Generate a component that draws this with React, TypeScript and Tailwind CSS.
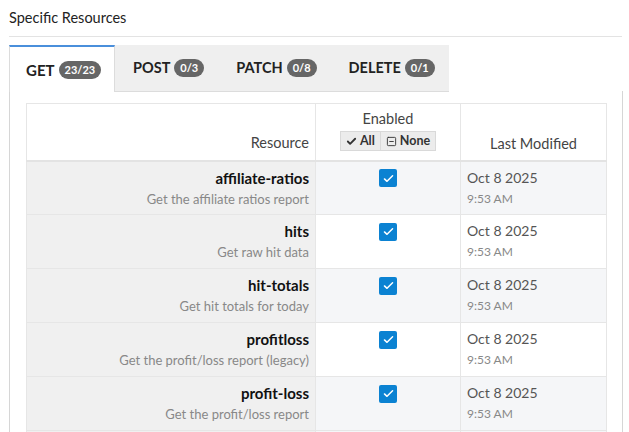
import { Check, SquareMinus } from 'lucide-react';

const rows = [
    { name: 'affiliate-ratios', desc: 'Get the affiliate ratios report' },
    { name: 'hits', desc: 'Get raw hit data' },
    { name: 'hit-totals', desc: 'Get hit totals for today' },
    { name: 'profitloss', desc: 'Get the profit/loss report (legacy)' },
    { name: 'profit-loss', desc: 'Get the profit/loss report' },
];

const tabs = [
    { label: 'GET', count: '23/23', active: true },
    { label: 'POST', count: '0/3' },
    { label: 'PATCH', count: '0/8' },
    { label: 'DELETE', count: '0/1' },
];

const CheckBox = () => (
    <span className="inline-flex w-[18px] h-[18px] items-center justify-center rounded-[2px] bg-[#0b82d2]">
        <svg viewBox="0 0 16 16" className="w-[13px] h-[13px]" fill="none" stroke="white" strokeWidth="1.8" strokeLinecap="round" strokeLinejoin="round">
            <path d="M3 8.5l3.2 3L13 4.5" />
        </svg>
    </span>
);

const App = () => {
    return (
        <div className="w-[629px] h-[432px] overflow-hidden bg-white font-['Lato','Liberation_Sans',sans-serif] text-[#222]">
            <div className="px-[9px] pt-[8px]">
                <h2 className="text-[14.5px] leading-[20px] text-[#222]">Specific Resources</h2>
                <div className="mt-[8px] h-px w-[613px] bg-[#e3e3e3]" />

                <div className="mt-[8px] flex w-fit bg-[#efefef] h-[47px]">
                    {tabs.map((t) =>
                        t.active ? (
                            <div
                                key={t.label}
                                className="shrink-0 flex items-center gap-[4px] h-[47px] w-[106px] pl-[16px] pt-[1px] bg-white border-t-2 border-[#4a8fdb] border-l border-l-[#dcdcdc] border-r border-r-[#dcdcdc]"
                            >
                                <span className="text-[15px] font-bold">{t.label}</span>
                                <span className="rounded-full bg-[#666] text-white text-[11px] font-bold px-[6px] leading-[18px]">{t.count}</span>
                            </div>
                        ) : (
                            <div key={t.label} className="shrink-0 flex items-center gap-[4px] h-[47px] pl-[18px] pr-[14px] border-b border-[#dcdcdc]">
                                <span className="text-[14.5px] font-bold">{t.label}</span>
                                <span className="rounded-full bg-[#666] text-white text-[11px] font-bold px-[6px] leading-[18px]">{t.count}</span>
                            </div>
                        ),
                    )}
                </div>

                <div className="w-[614px] h-[400px] border-l border-r border-[#d6d6d6] -mt-px pt-[12px] pl-[16px]">
                    <table className="w-[580px] border-collapse table-fixed">
                        <colgroup>
                            <col className="w-[289px]" />
                            <col className="w-[145px]" />
                            <col className="w-[146px]" />
                        </colgroup>
                        <thead>
                            <tr className="h-[57px] border-b-2 border-[#e3e3e3]">
                                <th className="border border-[#e6e6e6] align-bottom text-right font-normal text-[14.5px] text-[#444] pr-[6px] pb-[6px]">Resource</th>
                                <th className="border border-[#e6e6e6] align-top font-normal text-[14.5px] text-[#444] pt-[6px]">
                                    <div className="leading-[18px]">Enabled</div>
                                    <div className="mt-[3px] inline-flex">
                                        <span className="flex items-center gap-[3px] bg-[#ececec] border border-[#d9d9d9] px-[5px] h-[20px] text-[12.5px] font-bold text-[#333]">
                                            <Check size={11} strokeWidth={4} />All
                                        </span>
                                        <span className="flex items-center gap-[3px] bg-[#ececec] border border-l-0 border-[#d9d9d9] px-[5px] h-[20px] text-[12.5px] font-bold text-[#333]">
                                            <SquareMinus size={11} strokeWidth={2} />None
                                        </span>
                                    </div>
                                </th>
                                <th className="border border-[#e6e6e6] align-middle font-normal text-[14.5px] text-[#444] pt-[25px]">Last Modified</th>
                            </tr>
                        </thead>
                        <tbody>
                            {rows.map((r, i) => (
                                <tr key={r.name} className={i % 2 === 0 ? 'bg-[#f5f6f8] h-[54px]' : 'bg-white h-[54px]'}>
                                    <td className="border border-[#e6e6e6] bg-[#f0f0f0] text-right pr-[6px] align-top pt-[7px]">
                                        <div className="text-[15px] font-bold text-[#111] leading-[18px]">{r.name}</div>
                                        <div className="text-[13px] text-[#888] leading-[16px] mt-[4px]">{r.desc}</div>
                                    </td>
                                    <td className="border border-[#e6e6e6] text-center align-top pt-[5px]">
                                        <CheckBox />
                                    </td>
                                    <td className="border border-[#e6e6e6] align-top pl-[6px] pt-[7px]">
                                        <div className="text-[14px] text-[#555] leading-[18px]">Oct 8 2025</div>
                                        <div className="text-[12px] text-[#888] leading-[16px] mt-[4px]">9:53 AM</div>
                                    </td>
                                </tr>
                            ))}
                            <tr className="bg-[#f5f6f8] h-[54px]">
                                <td className="border border-[#e6e6e6] bg-[#f0f0f0]" />
                                <td className="border border-[#e6e6e6]" />
                                <td className="border border-[#e6e6e6]" />
                            </tr>
                        </tbody>
                    </table>
                </div>
            </div>
        </div>
    );
};

export default App;
